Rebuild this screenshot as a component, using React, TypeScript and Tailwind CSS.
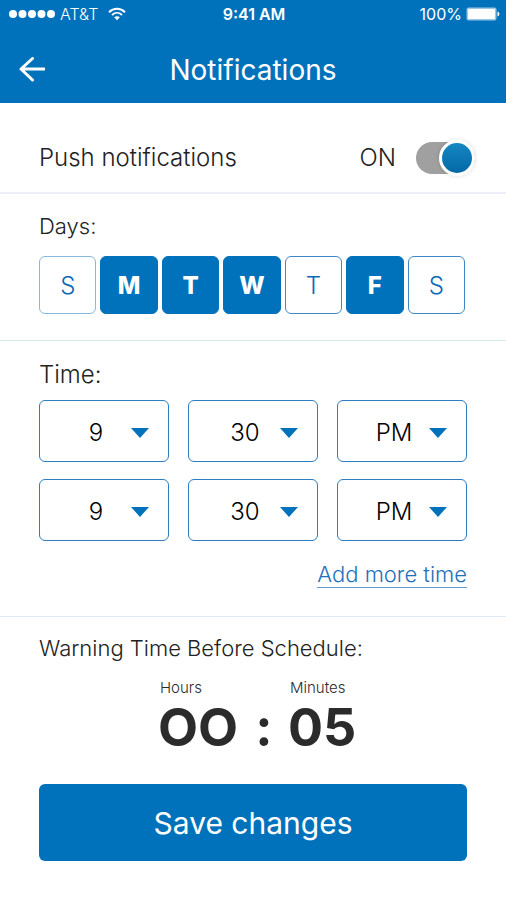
import { useState } from "react";

const DAYS = [
  { letter: "S", name: "Sunday", on: false, edge: "border-[#86b9e0]" },
  { letter: "M", name: "Monday", on: true, edge: "border-[#0072bc]" },
  { letter: "T", name: "Tuesday", on: true, edge: "border-[#0072bc]" },
  { letter: "W", name: "Wednesday", on: true, edge: "border-[#0072bc]" },
  { letter: "T", name: "Thursday", on: false, edge: "border-[#3f86c6]" },
  { letter: "F", name: "Friday", on: true, edge: "border-[#0072bc]" },
  { letter: "S", name: "Saturday", on: false, edge: "border-[#3f86c6]" },
];

const HOURS = ["1", "2", "3", "4", "5", "6", "7", "8", "9", "10", "11", "12"];
const MINUTES = ["00", "15", "30", "45"];
const PERIODS = ["AM", "PM"];

function StatusBar() {
  return (
    <div className="grid h-7 grid-cols-3 items-center pl-2 pr-1.5 text-[16px] leading-5">
      <div className="flex items-center">
        <svg width="48" height="10" viewBox="0 0 48 10" fill="currentColor" aria-hidden="true">
          <circle cx="5" cy="5" r="4" />
          <circle cx="14.5" cy="5" r="4" />
          <circle cx="24" cy="5" r="4" />
          <circle cx="33.500" cy="5" r="4" />
          <circle cx="43" cy="5" r="4" />
        </svg>
        <span className="ml-1 font-light">AT&amp;T</span>
        <svg className="ml-2.5" width="18" height="14" viewBox="0 0 18 14" fill="none" stroke="currentColor" aria-hidden="true">
          <path d="M1 5.200C5.500 0.600 12.500 0.600 17 5.200" strokeWidth="2" />
          <path d="M4 8C7 5.200 11 5.200 14 8" strokeWidth="1.800" />
          <path d="M6.200 10.300C7.800 8.900 10.200 8.900 11.800 10.300L9 13.200Z" fill="currentColor" stroke="none" />
        </svg>
      </div>
      <span className="text-center font-semibold">9:41 AM</span>
      <div className="flex items-center justify-end gap-1">
        <span>100%</span>
        <svg width="34" height="14" viewBox="0 0 34 14" fill="currentColor" aria-hidden="true">
          <rect x="0.500" y="0.500" width="30" height="13" rx="2" opacity="0.6" />
          <rect x="2" y="2" width="27" height="10" rx="1" />
          <path d="M31.500 4.500C34 5.500 34 8.500 31.500 9.500Z" />
        </svg>
      </div>
    </div>
  );
}

function Header() {
  return (
    <header className="bg-[#0072bc] text-white">
      <StatusBar />
      <div className="grid h-[75px] grid-cols-[48px_1fr_48px] items-center px-2 pt-2">
        <button type="button" aria-label="Back" className="flex h-12 items-center justify-center">
          <svg width="26" height="26" viewBox="0 0 26 26" fill="none" stroke="currentColor" strokeWidth="3" strokeLinecap="round" strokeLinejoin="round" aria-hidden="true">
            <path d="M25 12H2M13.500 1.500L2 12L13.500 23" />
          </svg>
        </button>
        <h1 className="text-center text-[28px] leading-8">Notifications</h1>
      </div>
    </header>
  );
}

function TimeSelect({ label, value, options }: { label: string; value: string; options: string[] }) {
  return (
    <div className="relative">
      <select
        aria-label={label}
        defaultValue={value}
        className="h-[62px] w-full appearance-none rounded-md border border-[#2d7dc3] bg-white pr-4 pt-1 text-center text-[24px] font-light text-black [text-align-last:center]"
      >
        {options.map((o) => (
          <option key={o}>{o}</option>
        ))}
      </select>
      <svg className="pointer-events-none absolute right-5 top-7" width="18" height="10" viewBox="0 0 18 10" fill="#0072bc" aria-hidden="true">
        <path d="M0 0H18L9 10Z" />
      </svg>
    </div>
  );
}

export default function App() {
  const [push, setPush] = useState(true);
  const [days, setDays] = useState(DAYS.map((d) => d.on));
  return (
    <div className="min-h-screen bg-white font-['Inter',sans-serif] text-[#222]">
      <Header />
      <main>
        <section className="flex h-[91px] items-center border-b-2 border-[#eceffa] px-[39px] pt-5">
          <label htmlFor="push" className="flex-1 text-[24px] font-light leading-8">
            Push notifications
          </label>
          <span className="mr-5 text-[24px] font-light leading-8">{push ? "ON" : "OFF"}</span>
          <span className="relative -mr-2 flex h-8 w-[59px] items-center rounded-full bg-[#a0a0a0]">
            <input
              id="push"
              type="checkbox"
              role="switch"
              checked={push}
              onChange={(e) => setPush(e.target.checked)}
              className="peer absolute inset-0 z-10 size-full cursor-pointer opacity-0"
            />
            <span className="size-9 rounded-full border-[3px] border-white bg-linear-to-b from-[#1488c4] to-[#0568a6] shadow-[0_0_3px_2px_rgba(0,0,0,0.06)] peer-checked:ml-auto" />
          </span>
        </section>

        <section className="border-b border-[#d5ebf0] px-[39px] pb-[26px] pt-[18px]">
          <h2 className="text-[22px] font-light leading-7">Days:</h2>
          <div className="mt-4 grid grid-cols-7 gap-1 pr-0.5">
            {DAYS.map((d, i) => (
              <button
                key={d.name}
                type="button"
                aria-label={d.name}
                aria-pressed={days[i]}
                onClick={() => setDays(days.map((v, j) => (j === i ? !v : v)))}
                className={`h-[58px] rounded-md border pt-0.5 text-[24px] ${d.edge} ${
                  days[i] ? "bg-[#0072bc] font-extrabold text-white" : "bg-white font-light text-[#0b69b4]"
                }`}
              >
                {d.letter}
              </button>
            ))}
          </div>
        </section>

        <section className="border-b border-[#dfe8f8] px-[39px] pb-7 pt-[18px]">
          <h2 className="text-[24px] font-light leading-8">Time:</h2>
          <div className="mt-[9px] grid grid-cols-3 gap-x-[19px] gap-y-[17px]">
            <TimeSelect label="First time, hour" value="9" options={HOURS} />
            <TimeSelect label="First time, minutes" value="30" options={MINUTES} />
            <TimeSelect label="First time, AM or PM" value="PM" options={PERIODS} />
            <TimeSelect label="Second time, hour" value="9" options={HOURS} />
            <TimeSelect label="Second time, minutes" value="30" options={MINUTES} />
            <TimeSelect label="Second time, AM or PM" value="PM" options={PERIODS} />
          </div>
          <div className="mt-5 flex justify-end">
            <a href="#add" className="border-b border-[#5f9bd1] text-[22px] font-light leading-[26px] text-[#1f70b8]">
              Add more time
            </a>
          </div>
        </section>

        <section className="px-[39px] pb-9 pt-[17px]">
          <h2 className="text-[22px] font-light leading-7">Warning Time Before Schedule:</h2>
          <div className="mt-4 grid grid-cols-[82px_48px_60px] justify-center text-[#2b2b2b]">
            <span className="pl-0.5 text-[15px] font-light leading-5">Hours</span>
            <span />
            <span className="pl-0.5 text-[15px] font-light leading-5">Minutes</span>
            <span className="text-[52px] font-bold leading-[60px]">OO</span>
            <span className="text-center text-[52px] font-bold leading-[60px]">:</span>
            <span className="text-[52px] font-bold leading-[60px]">05</span>
          </div>
          <button type="button" className="mt-[26px] h-[77px] w-full rounded-md bg-[#0072bc] pt-0.5 text-[30px] text-white">
            Save changes
          </button>
        </section>
      </main>
    </div>
  );
}
